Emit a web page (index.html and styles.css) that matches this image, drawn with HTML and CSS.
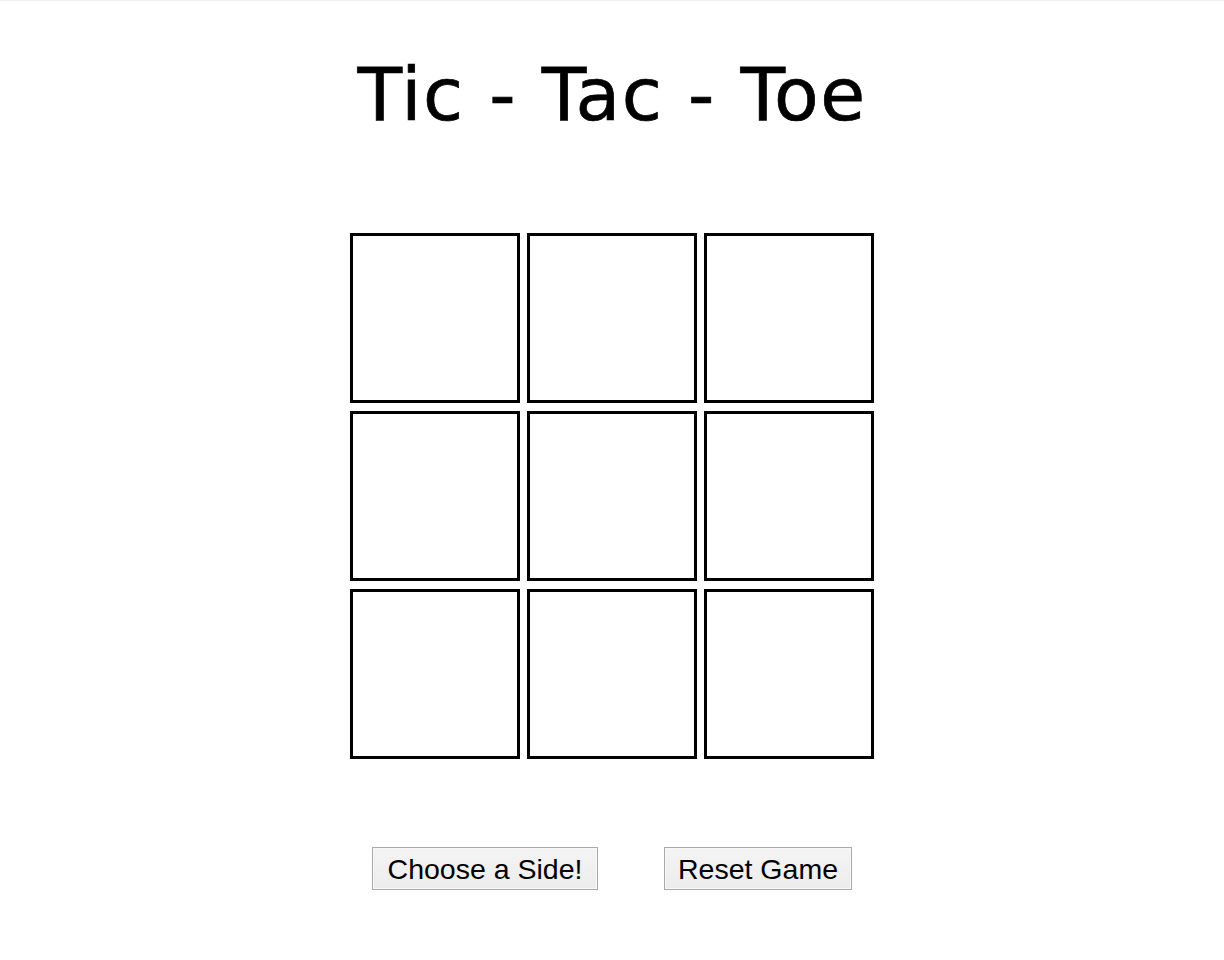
FILE: index.html
```html
<!DOCTYPE html>
<html lang="en">
<head>
<meta charset="utf-8">
<title>Tic - Tac - Toe</title>
<link rel="stylesheet" href="styles.css">
</head>
<body>
<div class="topline"></div>
<main class="page">
  <h1 class="title">Tic - Tac - Toe</h1>
  <div class="board">
    <div class="cell"></div>
    <div class="cell"></div>
    <div class="cell"></div>
    <div class="cell"></div>
    <div class="cell"></div>
    <div class="cell"></div>
    <div class="cell"></div>
    <div class="cell"></div>
    <div class="cell"></div>
  </div>
  <div class="controls">
    <button class="btn btn-side" type="button">Choose a Side!</button>
    <button class="btn btn-reset" type="button">Reset Game</button>
  </div>
</main>
</body>
</html>
```

FILE: styles.css
```css
html, body {
  margin: 0;
  padding: 0;
  background: #ffffff;
}

.topline {
  height: 1px;
  background: #eeeeee;
}

.page {
  display: flex;
  flex-direction: column;
  align-items: center;
}

.title {
  margin: 54px 0 0 0;
  font-family: "DejaVu Sans", sans-serif;
  font-weight: normal;
  font-size: 73px;
  line-height: 80px;
  color: #000;
  -webkit-text-stroke: 0.7px #000;
  letter-spacing: 1.45px;
}

.board {
  margin-top: 98px;
  display: grid;
  grid-template-columns: repeat(3, 170px);
  grid-template-rows: repeat(3, 170px);
  column-gap: 7px;
  row-gap: 8px;
}

.cell {
  box-sizing: border-box;
  border: 3px solid #000;
  background: #fff;
}

.controls {
  margin-top: 88px;
  display: flex;
  gap: 66px;
}

.btn {
  box-sizing: border-box;
  height: 43px;
  padding: 0 10px;
  font-family: "Liberation Sans", Arial, sans-serif;
  font-size: 28.5px;
  line-height: 43px;
  color: #000;
  background: linear-gradient(#f4f4f4, #ececec);
  border: 1px solid #a8a8a8;
  box-shadow: inset 0 0 0 1px #f8f8f8;
  border-radius: 0;
}

.btn-side {
  width: 226px;
}

.btn-reset {
  width: 188px;
}
```
